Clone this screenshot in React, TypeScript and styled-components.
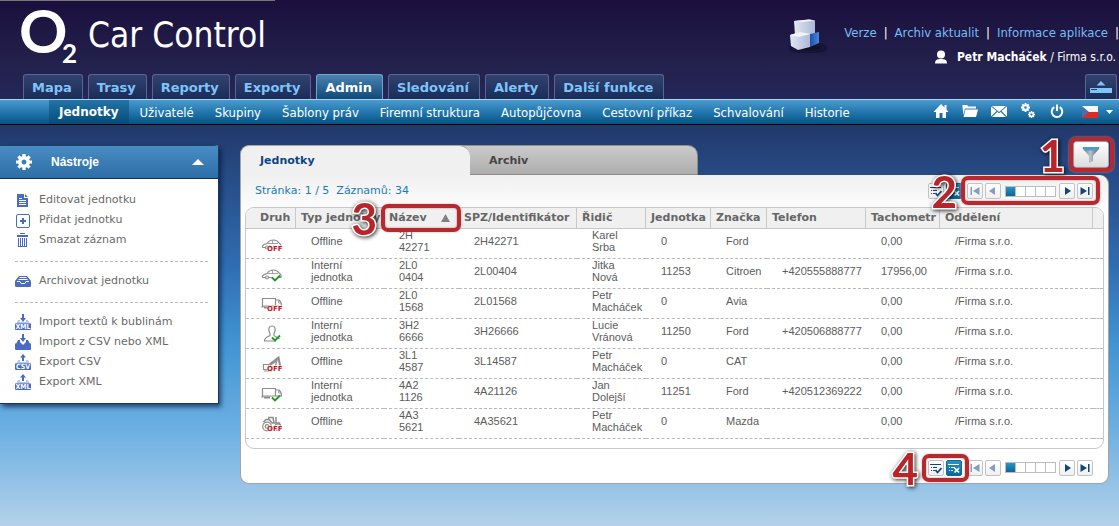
import React from "react";
import styled, { createGlobalStyle, css } from "styled-components";

const wide = `"DejaVu Sans", Verdana, sans-serif`;
const narrow = `"DejaVu Sans Condensed", "DejaVu Sans", Tahoma, sans-serif`;
const plain = `"Liberation Sans", Arial, sans-serif`;

const GlobalStyle = createGlobalStyle`
  * { box-sizing: border-box; }
  body { margin: 0; font-family: ${wide}; font-size: 11px; color: #666; }
  button { font: inherit; color: inherit; padding: 0; margin: 0; border: 0; background: none; cursor: pointer; }
  a { color: inherit; text-decoration: none; }
  svg { display: block; flex: none; }
  ul { list-style: none; margin: 0; padding: 0; }
`;

const Page = styled.div`
  min-height: 100vh;
  display: flex;
  flex-direction: column;
`;

/* ---------- header ---------- */

const Header = styled.header`
  background: linear-gradient(#1a0f3d, #23204c 50%, #252c60);
`;

const TopLine = styled.div`
  width: 275px;
  height: 1px;
  background: #77756f;
`;

const Brand = styled.div`
  display: flex;
  justify-content: space-between;
  height: 73px;
`;

const Logo = styled.a`
  display: flex;
  align-items: flex-start;
  padding: 6px 0 0 19px;
  color: #fff;
`;

const LogoMark = styled.svg`
  overflow: visible;
`;

const LogoName = styled.span`
  font: 35px/42px ${narrow};
  margin: 7px 0 0 7px;
`;

const Account = styled.div`
  display: flex;
  padding-top: 16px;
`;

const AccountText = styled.div`
  display: flex;
  flex-direction: column;
  align-items: flex-end;
  gap: 8px;
  padding-top: 8px;
  margin-left: 16px;
  font: 13px/16px ${narrow};
  color: #fff;
`;

const Links = styled.nav`
  display: flex;
  gap: 7px;
  a { color: #76bdf5; }
`;

const User = styled.div`
  display: flex;
  align-items: center;
  gap: 8px;
  padding-right: 3px;
  font-size: 12px;
`;

const TabRow = styled.nav`
  display: flex;
  gap: 5px;
  padding: 0 2px 0 23px;
`;

const MainTab = styled.a<{ $on?: boolean }>`
  height: 25px;
  padding: 0 10px 0 8px;
  border: 1px solid ${(p) => (p.$on ? "#6fa6cc" : "#56668f")};
  border-bottom: 0;
  border-radius: 3px 3px 0 0;
  font: bold 13px/25px ${wide};
  white-space: nowrap;
  color: ${(p) => (p.$on ? "#fff" : "#7fc4fb")};
  background: ${(p) => (p.$on ? "linear-gradient(#4a82b0, #0f4a78)" : "linear-gradient(#32426e, #1a2c58)")};
`;

const Collapse = styled.button`
  margin-left: auto;
  width: 32px;
  height: 25px;
  border: 1px solid #56668f;
  border-bottom: 0;
  border-radius: 3px 3px 0 0;
  background: linear-gradient(#32426e, #1a2c58);
  display: flex;
  justify-content: center;
  padding-top: 5px;
`;

const SubBar = styled.div`
  display: flex;
  align-items: stretch;
  justify-content: space-between;
  height: 26px;
  padding-left: 49px;
  border-top: 1px solid #a5d3f0;
  border-bottom: 1px solid #000;
  background: linear-gradient(#4a9bce, #2377ae 50%, #075282);
`;

const SubNav = styled.nav`
  display: flex;
  gap: 1px;
`;

const SubLink = styled.a<{ $on?: boolean }>`
  padding: 0 10px;
  font: ${(p) => (p.$on ? `bold 12px/25px ${wide}` : `13px/25px ${narrow}`)};
  color: #fff;
  white-space: nowrap;
  ${(p) => p.$on && css`background: linear-gradient(#2274a8, #074a78);`}
`;

const QuickIcons = styled.div`
  display: flex;
  align-items: center;
  gap: 13px;
  padding: 0 6px 3px 0;
`;

const LangButton = styled.button`
  display: flex;
  align-items: center;
  gap: 8px;
  padding: 3px 0 0 4px;
`;

/* ---------- body ---------- */

const Body = styled.main`
  flex: 1;
  display: flex;
  align-items: flex-start;
  gap: 21px;
  padding: 20px 10px 42px 0;
  background: linear-gradient(#22386b, #2f6db2 35%, #4195d3 55%, #6cb0e3 76%, #b4d1e9);
`;

const Sidebar = styled.aside`
  flex: none;
  width: 219px;
  background: #fff;
  border-right: 1px solid #17375c;
  border-bottom: 1px solid #17375c;
  border-radius: 0 3px 0 0;
  box-shadow: 2px 3px 5px rgba(0, 15, 50, 0.65);
`;

const SideHead = styled.button`
  width: 100%;
  height: 34px;
  display: flex;
  align-items: center;
  padding: 0 14px 0 16px;
  color: #fff;
  background: linear-gradient(#4a8cc4, #2d6ea6);
  border-top: 1px solid #1a416b;
  border-bottom: 1px solid #12314f;
  border-radius: 0 3px 0 0;
  font: bold 12px/16px ${plain};
  span { flex: 1; text-align: left; padding-left: 19px; }
`;

const Tools = styled.ul`
  padding: 11px 0;
  margin: 0 10px 0 15px;
  & + & { border-top: 1px dashed #b9b9b9; padding-top: 9px; }
`;

const ToolLink = styled.a`
  display: flex;
  align-items: center;
  gap: 8px;
  height: 20px;
  font: 11px/20px ${wide};
  color: #6a6a6a;
  white-space: nowrap;
`;

const Content = styled.section`
  flex: 1;
  min-width: 0;
`;

const ContentTabs = styled.div`
  display: flex;
  align-items: flex-start;
`;

const ContentTab = styled.a<{ $on?: boolean }>`
  flex: 0 1 ${(p) => (p.$on ? 230 : 238)}px;
  height: 30px;
  padding-left: ${(p) => (p.$on ? 19 : 28)}px;
  font: bold 11px/30px ${wide};
  border: 1px solid #a8a4a4;
  ${(p) =>
    p.$on
      ? css`
          position: relative;
          color: #0b4684;
          background: #f0f0f0;
          border-width: 1px 0 0 1px;
          border-radius: 9px 11px 0 0;
        `
      : css`
          color: #454545;
          background: linear-gradient(#cbcbcb, #adadad);
          border-color: #908c8c;
          margin-left: -10px;
          border-radius: 0 10px 0 0;
        `}
`;

const FilterSpot = styled.div`
  position: relative;
  margin-left: auto;
  margin-top: -4px;
`;

const FilterButton = styled.button`
  width: 36px;
  height: 27px;
  border: 1px solid #aab;
  border-radius: 3px;
  background: linear-gradient(#fff, #dcdcdc);
  display: flex;
  align-items: center;
  justify-content: center;
`;

const Panel = styled.div`
  border: 1px solid #a8a4a4;
  border-top: 0;
  border-radius: 0 9px 9px 9px;
  padding: 0 4px;
  background: linear-gradient(#f0f0f0, #fff 40px);
`;

const Bar = styled.div`
  display: flex;
  align-items: center;
  justify-content: space-between;
  height: 32px;
  padding: 0 11px 0 10px;
  font: 11px/16px ${wide};
  color: #1b7ab8;
  white-space: pre;
`;

const BottomBar = styled(Bar)`
  height: 34px;
  padding-top: 3px;
  justify-content: flex-end;
`;

const Pager = styled.div`
  display: flex;
  gap: 5px;
`;

const Group = styled.div`
  position: relative;
  display: flex;
  gap: 2px;
`;

const Square = styled.button<{ $on?: boolean; $dim?: boolean }>`
  width: 16px;
  height: 16px;
  display: flex;
  align-items: center;
  justify-content: center;
  border: 1px solid ${(p) => (p.$on ? "#0d6a9c" : "#c2c2c2")};
  border-radius: 2px;
  color: ${(p) => (p.$on ? "#fff" : p.$dim ? "#829dbd" : "#0e4680")};
  background: ${(p) => (p.$on ? "linear-gradient(#2795c6, #0a6797)" : "linear-gradient(#fff, #f0f0f0)")};
`;

const Steps = styled.div`
  display: flex;
  align-self: center;
  margin: 0 1px 0 2px;
  border: 1px solid #bdbdbd;
`;

const Step = styled.button<{ $on?: boolean }>`
  width: ${(p) => (p.$on ? 9 : 10)}px;
  height: 9px;
  background: ${(p) => (p.$on ? "linear-gradient(#2795c6, #0a6797)" : "#fff")};
  ${(p) => !p.$on && css`border-left: 1px solid #bdbdbd;`}
`;

/* ---------- numbered marks ---------- */

const Ring = styled.span<{ $gap: string }>`
  position: absolute;
  z-index: 2;
  inset: ${(p) => p.$gap};
  border: 4px solid #b8292f;
  border-radius: 7px;
  box-shadow: 0 0 2px #d99, inset 0 0 2px rgba(120, 0, 0, 0.5);
  pointer-events: none;
`;

const Mark = styled.span`
  position: absolute;
  z-index: 3;
  right: 100%;
  top: 50%;
  margin: -22px 8px 0 0;
  font: bold 44px/44px Lato, sans-serif;
  color: #b8242a;
  -webkit-text-stroke: 3px #fff;
  paint-order: stroke fill;
  filter: drop-shadow(1px 1px 2px rgba(0, 0, 0, 0.85));
`;

/* ---------- table ---------- */

const Frame = styled.div`
  border: 1px solid #c8c8c8;
  border-radius: 9px;
  padding-bottom: 9px;
  background: #fff;
`;

const Grid = styled.table`
  width: 100%;
  table-layout: fixed;
  border-collapse: separate;
  border-spacing: 0;
`;

const Th = styled.th`
  position: relative;
  height: 21px;
  padding: 0 0 0 5px;
  text-align: left;
  font: bold 11px/18px ${wide};
  color: #666;
  background: #f0f0f0;
  border-bottom: 1px solid #c8c8c8;
  border-right: 1px solid #c8c8c8;
  white-space: nowrap;
  &:first-child { padding-left: 14px; border-radius: 8px 0 0 0; }
  &:last-child { border-right: 0; border-radius: 0 8px 0 0; }
`;

const SortButton = styled.button`
  display: flex;
  align-items: center;
  justify-content: space-between;
  width: 100%;
  padding-right: 8px;
`;

const Td = styled.td`
  height: 30px;
  padding: 0 0 5px 15px;
  border-bottom: 1px dashed #b9b9b9;
  font: 11px/12px ${plain};
  color: #5c5c5c;
  white-space: pre;
`;

const IconTd = styled(Td)`
  padding-bottom: 0;
`;

/* ---------- drawings ---------- */

type Kind = "car" | "truck" | "person" | "digger" | "tractor";

const kindShapes: Record<Kind, React.ReactNode> = {
  car: (
    <>
      <path d="M4 12.500H2.500Q1 12.500 1.500 11Q2 9.500 6 8.500Q8.500 5 12.500 5Q16 5 18.500 8.500Q20.500 9.500 20 12.500H18M12 12.500H8" />
      <path d="M6.500 8.500H17M11.500 5.500V8.500" strokeWidth="0.800" />
      <circle cx="6" cy="12.500" r="1.500" />
    </>
  ),
  truck: (
    <>
      <path d="M1.500 3.500H14.500V11H1.500ZM14.500 5H18Q20.500 7 20.500 11H14.500" />
      <path d="M3 12.500H9M1.500 11V12.500" strokeWidth="2" />
      <path d="M17.500 5.500V8H20" strokeWidth="0.800" />
    </>
  ),
  person: <path d="M11 1C8 1 7.500 3.500 8 6C8.500 8 9.500 9 9 10.500C7 12 3.500 12 3.500 16H15M11 1C14 1 14.500 3.500 14 6C13.500 8 12.500 9 13 10.500C14 12 17 12 18.500 14" />,
  digger: (
    <>
      <path d="M2.500 9.500H8V12H11.500V14.500H2.500ZM3 16H11" />
      <path d="M8.500 9.500L17.500 2.500L19.500 13" strokeWidth="2" />
      <path d="M9 10.500L16 5.500L14 12M14 12H20" />
    </>
  ),
  tractor: (
    <>
      <circle cx="6" cy="11.500" r="4.300" /><circle cx="6" cy="11.500" r="1.800" /><circle cx="17" cy="12" r="3.200" />
      <path d="M2.500 7L5 4.500H8L11 8H18.500V10M7 2.500H12.500M8 2.500L7 5M12 2.500L13 8M15 2V8" strokeWidth="1.500" />
    </>
  ),
};

const KindIcon = ({ kind, off }: { kind: Kind; off: boolean }) => (
  <svg width="22" height="18" viewBox="0 0 22 18" fill="none" stroke="#8d8d8d" strokeWidth="1.200">
    <title>{off ? "Offline" : "Online"}</title>
    {kindShapes[kind]}
    {off ? (
      <text x="6" y="16" fontFamily="DejaVu Sans" fontWeight="bold" fontSize="7" fill="#c3161c" stroke="#fff" strokeWidth="1" paintOrder="stroke">OFF</text>
    ) : (
      <path d="M11 12.500L14 15.500L19 10.500" stroke="#1c9a22" strokeWidth="1.800" />
    )}
  </svg>
);

const Tray = ({ label, up }: { label?: string; up?: boolean }) => (
  <svg width="16" height="16" viewBox="0 0 16 16">
    <path d="M1 10L3 6H5V8H11V6H13L15 10V16H1Z" fill={label ? "#b9c8ea" : "#4a6cc0"} />
    <path d="M0 9.500H16V15Q16 16 15 16H1Q0 16 0 15Z" fill="#4a6cc0" />
    {!label && <path d="M5 6H11V8L8 11L5 8Z" fill="#fff" />}
    <path d={up ? "M8 0L11 3.500H9V7H7V3.500H5Z" : "M7 0H9V4H11L8 8L5 4H7Z"} fill="#4a6cc0" />
    {label && (
      <text x="8" y="15" textAnchor="middle" fontFamily="DejaVu Sans Condensed" fontWeight="bold" fontSize="7" fill="#fff">{label}</text>
    )}
  </svg>
);

const Blue = ({ children }: { children: React.ReactNode }) => (
  <svg width="16" height="16" viewBox="0 0 16 16" fill="#4a6cc0">{children}</svg>
);

const DocIcon = () => (
  <Blue>
    <path d="M2 2H9V6H13V15H2Z" /><path d="M10 2L13 5H10Z" />
    <path d="M4 8.500H11M4 10.500H11M4 12.500H11M4 6.500H7" stroke="#fff" />
  </Blue>
);
const AddIcon = () => (
  <Blue>
    <rect x="1.500" y="2.500" width="13" height="13" rx="1.500" fill="none" stroke="#4a6cc0" />
    <path d="M7 6H9V8H11V10H9V12H7V10H5V8H7Z" />
  </Blue>
);
const BinIcon = () => (
  <Blue>
    <path d="M5 1H10V2H5ZM2 3H13V5H2ZM3 6H12V15H3Z" />
    <path d="M4.500 6V14M6.500 6V14M8.500 6V14M10.500 6V14" stroke="#fff" />
  </Blue>
);
const ArchiveIcon = () => (
  <Blue>
    <path d="M4 3H12L16 8V12.500Q16 14 14.500 14H1.500Q0 14 0 12.500V8Z" />
    <path d="M4.500 4.500H11.500M3.500 6.500H12.500M2 8.500H5L6 10.500H10L11 8.500H14" stroke="#fff" fill="none" />
  </Blue>
);

const Gear = ({ size, x = 0, y = 0 }: { size: number; x?: number; y?: number }) => (
  <svg x={x} y={y} width={size} height={size} viewBox="-8 -8 16 16" fill="none" stroke="#fff">
    <circle r="4.200" strokeWidth="3.600" />
    {[0, 45, 90, 135].map((a) => (
      <path key={a} d="M0 -8V-5M0 5V8" strokeWidth="3.200" transform={`rotate(${a})`} />
    ))}
  </svg>
);

const White = ({ children }: { children: React.ReactNode }) => (
  <svg width="16" height="16" viewBox="0 0 16 16" fill="#fff">{children}</svg>
);

const quick: [string, React.ReactNode][] = [
  ["Domů", <White><path d="M8 1L0.500 9H3V15H6.500V10H9.500V15H13V9H15.500L13.500 6.500V2H11.500V4.500Z" /></White>],
  ["Složky", <White><path d="M0.500 2H5L6.500 3.500H14V5.500H3L1.500 12L0.500 4Z" /><path d="M3.500 6.500H16L14 14H1.500Z" /></White>],
  ["Zprávy", <White><path d="M0 3.500L5.500 8L0 13.500ZM1 3H15L8 9ZM16 3.500L10.500 8L16 13.500ZM1 14L6.300 9L8 10.300L9.700 9L15 14Z" /></White>],
  ["Nastavení", <White><Gear size={9} x={1} y={0} /><Gear size={7} x={8} y={8} /></White>],
  ["Odhlásit", <White><path d="M5.300 4.200A5.300 5.300 0 1 0 10.700 4.200M8 1.500V8" fill="none" stroke="#fff" strokeWidth="2" /></White>],
];

const Arrow = ({ left, bar }: { left?: boolean; bar?: boolean }) => (
  <svg width="12" height="10" viewBox="0 0 12 10" fill="currentColor">
    <g transform={left ? "matrix(-1 0 0 1 12 0)" : undefined}>
      <path d={bar ? "M1.500 1L8 5L1.500 9Z" : "M4 1L10 5L4 9Z"} />
      {bar && <path d="M9 1H10.500V9H9Z" />}
    </g>
  </svg>
);

const ListIcon = ({ clear }: { clear?: boolean }) => (
  <svg width="12" height="12" viewBox="0 0 12 12" fill="none" stroke="currentColor">
    <path d="M0 2.500H11M3 5.500H7M3 8.500H5M1 5.500H2M1 8.500H2" />
    <path d={clear ? "M6.500 6L11 10.500M11 6L6.500 10.500" : "M5.500 8L7.500 10.500L11.500 6"} strokeWidth="1.700" />
  </svg>
);

const PagerControls = ({ ringSteps, ringSelect }: { ringSteps?: boolean; ringSelect?: boolean }) => (
  <Pager>
    <Group>
      <Square aria-label="Vybrat vše"><ListIcon /></Square>
      <Square $on aria-label="Zrušit výběr"><ListIcon clear /></Square>
      {ringSelect && <Ring $gap="-6px -7px -6px -6px"><Mark>4</Mark></Ring>}
    </Group>
    <Group>
      <Square $dim aria-label="První strana"><Arrow left bar /></Square>
      <Square $dim aria-label="Předchozí strana"><Arrow left /></Square>
      <Steps>
        {[1, 2, 3, 4, 5].map((n) => <Step key={n} $on={n === 1} aria-label={`Strana ${n}`} />)}
      </Steps>
      <Square aria-label="Další strana"><Arrow /></Square>
      <Square aria-label="Poslední strana"><Arrow bar /></Square>
      {ringSteps && <Ring $gap="-7px -7px -6px -6px"><Mark>2</Mark></Ring>}
    </Group>
  </Pager>
);

/* ---------- data ---------- */

const mainTabs = ["Mapa", "Trasy", "Reporty", "Exporty", "Admin", "Sledování", "Alerty", "Další funkce"];
const subLinks = ["Jednotky", "Uživatelé", "Skupiny", "Šablony práv", "Firemní struktura", "Autopůjčovna", "Cestovní příkaz", "Schvalování", "Historie"];

const toolGroups: [string, React.ReactNode][][] = [
  [["Editovat jednotku", <DocIcon />], ["Přidat jednotku", <AddIcon />], ["Smazat záznam", <BinIcon />]],
  [["Archivovat jednotku", <ArchiveIcon />]],
  [
    ["Import textů k bublinám", <Tray label="XML" />],
    ["Import z CSV nebo XML", <Tray />],
    ["Export CSV", <Tray label="CSV" up />],
    ["Export XML", <Tray label="XML" up />],
  ],
];

const columns: [string, number?][] = [
  ["Druh", 50], ["Typ jednotky", 88], ["Název", 75], ["SPZ/Identifikátor", 118], ["Řidič", 69],
  ["Jednotka", 65], ["Značka", 56], ["Telefon", 99], ["Tachometr", 74], ["Oddělení"], ["", 10],
];

const rows: [Kind, boolean, ...string[]][] = [
  ["car", true, "2H\n42271", "2H42271", "Karel\nSrba", "0", "Ford", "", "0,00"],
  ["car", false, "2L0\n0404", "2L00404", "Jitka\nNová", "11253", "Citroen", "+420555888777", "17956,00"],
  ["truck", true, "2L0\n1568", "2L01568", "Petr\nMacháček", "0", "Avia", "", "0,00"],
  ["person", false, "3H2\n6666", "3H26666", "Lucie\nVránová", "11250", "Ford", "+420506888777", "0,00"],
  ["digger", true, "3L1\n4587", "3L14587", "Petr\nMacháček", "0", "CAT", "", "0,00"],
  ["truck", false, "4A2\n1126", "4A21126", "Jan\nDolejší", "11251", "Ford", "+420512369222", "0,00"],
  ["tractor", true, "4A3\n5621", "4A35621", "Petr\nMacháček", "0", "Mazda", "", "0,00"],
];

export default function App() {
  return (
    <Page>
      <GlobalStyle />
      <Header>
        <TopLine />
        <Brand>
          <Logo href="#">
            <LogoMark width="62" height="64" viewBox="0 0 62 64" fill="#fff" fontFamily="Lato, sans-serif" fontWeight="bold">
              <text x="0" y="46" fontSize="60">O</text>
              <text x="43" y="56" fontSize="26">2</text>
            </LogoMark>
            <LogoName>Car Control</LogoName>
          </Logo>
          <Account>
            <svg width="44" height="40" viewBox="0 0 44 40">
              <defs>
                <linearGradient id="face" x1="0" x2="1"><stop stopColor="#e4e8f4" /><stop offset="1" stopColor="#aab6d8" /></linearGradient>
                <linearGradient id="side" x1="0" x2="1"><stop stopColor="#1d50a8" /><stop offset="1" stopColor="#4d85dc" /></linearGradient>
                <filter id="soft"><feGaussianBlur stdDeviation="2" /></filter>
              </defs>
              <ellipse cx="24" cy="31" rx="18" ry="4" fill="#0c0a22" filter="url(#soft)" />
              <path d="M10 4L25 2.500L31 3.500L31 18L11 18Z" fill="url(#face)" />
              <path d="M10 4L25 2.500L31 3.500L19 5Z" fill="#f4f5fa" />
              <path d="M6 18L16 15L27 17L26 30L14 33L7 29Z" fill="url(#face)" />
              <path d="M6 18L16 15L27 17L14 20Z" fill="#f2f4fb" />
              <path d="M26 17L35 15L35 26L26 30Z" fill="url(#side)" />
            </svg>
            <AccountText>
              <Links>
                <a href="#">Verze</a>|<a href="#">Archiv aktualit</a>|<a href="#">Informace aplikace</a>|
              </Links>
              <User>
                <svg width="16" height="16" viewBox="0 0 16 16" fill="#fff">
                  <circle cx="8" cy="5.500" r="4" /><path d="M2 14.500C2 10.500 5 10 8 10S14 10.500 14 14.500Z" />
                </svg>
                <span><b>Petr Macháček</b> / Firma s.r.o.</span>
              </User>
            </AccountText>
          </Account>
        </Brand>
        <TabRow>
          {mainTabs.map((t) => <MainTab href="#" key={t} $on={t === "Admin"}>{t}</MainTab>)}
          <Collapse aria-label="Sbalit záhlaví">
            <svg width="24" height="15" viewBox="0 0 24 15" fill="#7fc4fb">
              <path d="M12 1L16.500 5.500H7.500ZM1 8H23V13H1Z" /><path d="M2 9.500H8" stroke="#23406e" />
            </svg>
          </Collapse>
        </TabRow>
        <SubBar>
          <SubNav>
            {subLinks.map((t, i) => <SubLink href="#" key={t} $on={i === 0}>{t}</SubLink>)}
          </SubNav>
          <QuickIcons>
            {quick.map(([name, icon]) => <button key={name} aria-label={name}>{icon}</button>)}
            <LangButton aria-label="Jazyk">
              <svg width="16" height="12" viewBox="0 0 16 12">
                <path d="M0 0H16V6H0Z" fill="#f4f6fa" /><path d="M0 6H16V12H0Z" fill="#dd2a22" /><path d="M0 0L7 6L0 12Z" fill="#4c6fa8" />
              </svg>
              <svg width="7" height="5" viewBox="0 0 7 5" fill="#fff"><path d="M0 0H7L3.500 4Z" /></svg>
            </LangButton>
          </QuickIcons>
        </SubBar>
      </Header>

      <Body>
        <Sidebar>
          <SideHead>
            <Gear size={16} />
            <span>Nástroje</span>
            <svg width="12" height="7" viewBox="0 0 12 7" fill="#fff"><path d="M6 0L12 6H0Z" /></svg>
          </SideHead>
          {toolGroups.map((group, i) => (
            <Tools key={i}>
              {group.map(([name, icon]) => (
                <li key={name}><ToolLink href="#">{icon}{name}</ToolLink></li>
              ))}
            </Tools>
          ))}
        </Sidebar>

        <Content>
          <ContentTabs>
            <ContentTab href="#" $on>Jednotky</ContentTab>
            <ContentTab href="#">Archiv</ContentTab>
            <FilterSpot>
              <FilterButton aria-label="Filtr">
                <svg width="18" height="18" viewBox="0 0 18 18">
                  <defs><linearGradient id="metal" x1="0" x2="1"><stop stopColor="#5d6d78" /><stop offset="0.450" stopColor="#b9c4cc" /><stop offset="1" stopColor="#4d5a66" /></linearGradient></defs>
                  <path d="M0.500 2L7 10V17L11 15V10L17.500 2Z" fill="url(#metal)" />
                  <path d="M0.500 1H17.500L16 4.500H2Z" fill="#4d9cc4" />
                </svg>
              </FilterButton>
              <Ring $gap="-4px -5px -4px -4px"><Mark>1</Mark></Ring>
            </FilterSpot>
          </ContentTabs>
          <Panel>
            <Bar>
              <span>{"Stránka: 1 / 5  Záznamů: 34"}</span>
              <PagerControls ringSteps />
            </Bar>
            <Frame>
              <Grid>
                <colgroup>
                  {columns.map(([name, w]) => <col key={name} width={w} />)}
                </colgroup>
                <thead>
                  <tr>
                    {columns.map(([name]) => (
                      <Th key={name} scope="col">
                        {name === "Název" ? (
                          <>
                            <SortButton>
                              {name}
                              <svg width="9" height="8" viewBox="0 0 9 8" fill="#808080"><path d="M4.500 0L9 8H0Z" /></svg>
                            </SortButton>
                            <Ring $gap="-4px -3px"><Mark>3</Mark></Ring>
                          </>
                        ) : name}
                      </Th>
                    ))}
                  </tr>
                </thead>
                <tbody>
                  {rows.map(([kind, off, ...cells]) => (
                    <tr key={cells[1]}>
                      <IconTd><KindIcon kind={kind} off={off} /></IconTd>
                      <Td>{off ? "Offline" : "Interní\njednotka"}</Td>
                      {cells.map((c, i) => <Td key={i}>{c}</Td>)}
                      <Td>/Firma s.r.o.</Td>
                      <Td />
                    </tr>
                  ))}
                </tbody>
              </Grid>
            </Frame>
            <BottomBar>
              <PagerControls ringSelect />
            </BottomBar>
          </Panel>
        </Content>
      </Body>
    </Page>
  );
}
